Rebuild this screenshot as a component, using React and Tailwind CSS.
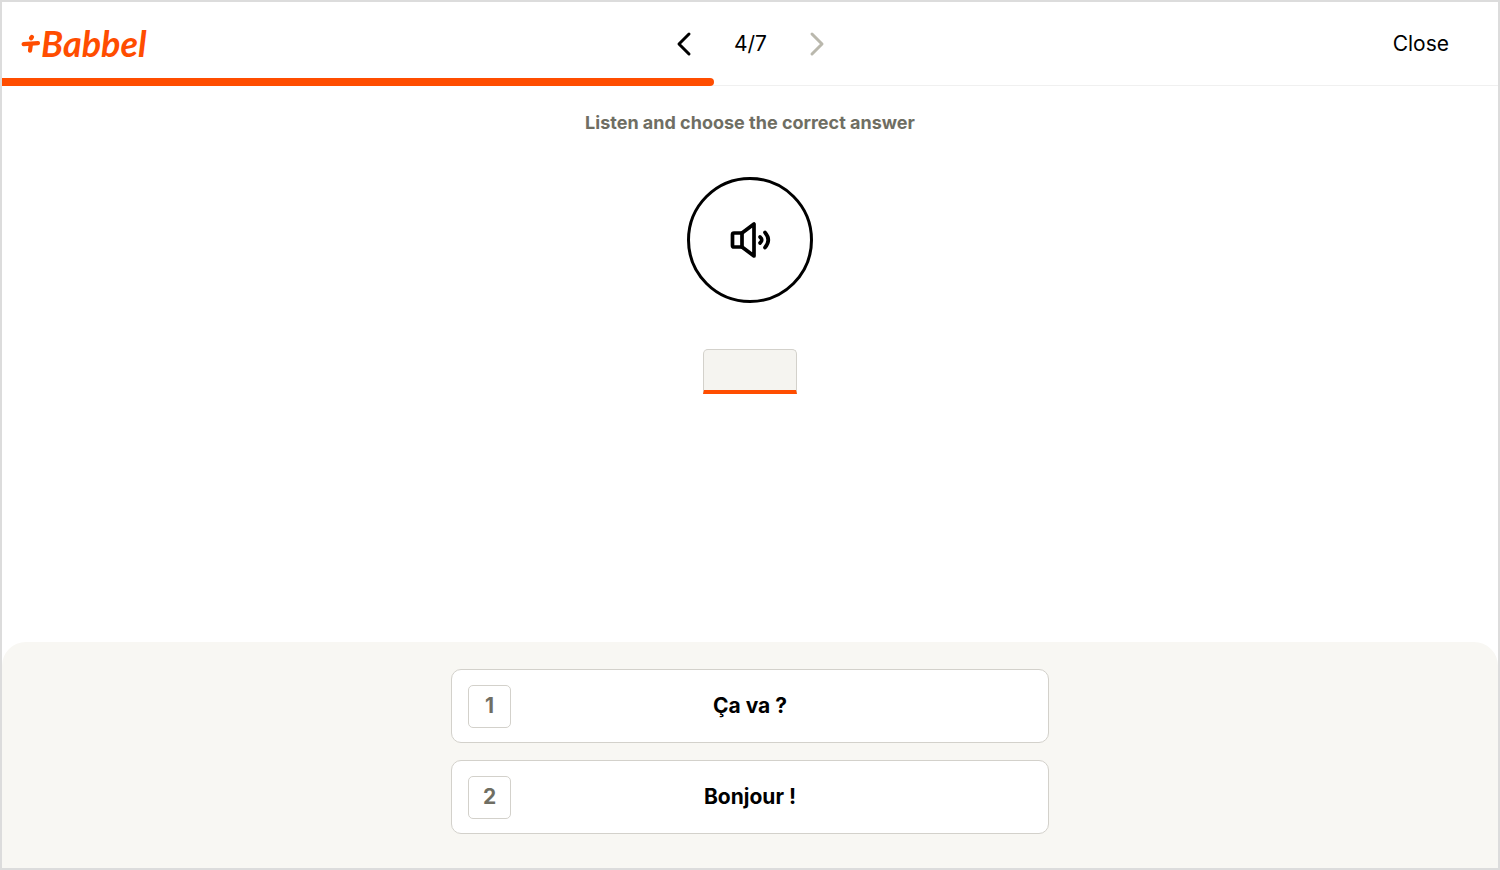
const answers = ["Ça va ?", "Bonjour !"];

function Logo() {
  return (
    <a href="#" aria-label="Babbel" className="flex items-center pb-0.5 text-[#ff4d00]">
      <svg width="20" height="28" viewBox="0 0 20 28" fill="none" stroke="currentColor" strokeLinecap="round">
        <path d="M2.6 15.2L17 14.2" strokeWidth="4.2" />
        <path d="M9.800 16L9 21.600" strokeWidth="4.200" />
        <path d="M10.900 8L10.100 9.100" strokeWidth="4.400" />
      </svg>
      <span className="font-[Lato,sans-serif] text-4xl font-bold italic">Babbel</span>
    </a>
  );
}

function Chevron({ d }) {
  return (
    <svg width="16" height="26" viewBox="0 0 16 26" fill="none" stroke="currentColor" strokeWidth="3" strokeLinecap="round" strokeLinejoin="round">
      <path d={d} />
    </svg>
  );
}

function Header() {
  return (
    <header className="relative grid h-[84px] grid-cols-3 items-center border-b border-[#f0f0f0] pr-[49px] pl-[19px]">
      <Logo />
      <nav className="flex items-center justify-center gap-[42px] pl-[31px]">
        <button type="button" aria-label="Previous">
          <Chevron d="M13 3L3 13L13 23" />
        </button>
        <span className="text-[21px]">4/7</span>
        <button type="button" aria-label="Next" disabled className="text-[#bab8ad]">
          <Chevron d="M3 3L13 13L3 23" />
        </button>
      </nav>
      <button type="button" className="justify-self-end text-[21px]">Close</button>
      <div
        role="progressbar"
        aria-label="Lesson progress"
        aria-valuenow={48}
        className="absolute -bottom-px left-0 h-2 w-[47.6%] rounded-r-full bg-[#ff4d00]"
      />
    </header>
  );
}

function SpeakerIcon() {
  return (
    <svg width="42" height="40" viewBox="0 0 42 40" fill="none" stroke="currentColor" strokeWidth="3.7" strokeLinecap="round" strokeLinejoin="round">
      <path d="M13 13H5Q3.500 13 3.500 14.500V25.500Q3.500 27 5 27H13Z" />
      <path d="M13 13L25 4V36L13 27" />
      <path d="M31 17Q34.500 20 31 23" />
      <path d="M36 12.500Q42.500 20 36 27.500" />
    </svg>
  );
}

function Answer({ number, text }) {
  return (
    <button
      type="button"
      className="grid h-[74px] w-full grid-cols-[44px_1fr_44px] items-center rounded-[10px] border border-[#d3d1cb] bg-white px-4"
    >
      <span className="flex h-[43px] w-[43px] items-center justify-center rounded-[5px] border border-[#d3d1cb] text-[#6f6e63]">
        {number}
      </span>
      <span>{text}</span>
    </button>
  );
}

export default function App() {
  return (
    <div className="flex min-h-screen flex-col border-2 border-[#dcdcdc] bg-white font-[Inter,sans-serif] text-black">
      <Header />
      <main className="flex flex-1 flex-col">
        <section className="flex flex-1 flex-col items-center pt-[23px]">
          <h1 className="text-lg font-bold text-[#6f6e63]">Listen and choose the correct answer</h1>
          <button
            type="button"
            aria-label="Play audio"
            className="mt-10 flex h-[126px] w-[126px] items-center justify-center rounded-full border-3 border-black"
          >
            <SpeakerIcon />
          </button>
          <input
            type="text"
            readOnly
            aria-label="Answer"
            className="mt-[46px] h-[45px] w-[94px] rounded-t-[5px] border border-b-4 border-[#d3d1cb] border-b-[#ff4d00] bg-[#f5f4f0] outline-none"
          />
        </section>
        <section className="rounded-t-3xl bg-[#f8f7f3] px-4 pt-[27px] pb-[34px]">
          <div className="mx-auto flex max-w-[598px] flex-col gap-[17px] text-[21px] font-bold">
            {answers.map((text, index) => (
              <Answer key={text} number={index + 1} text={text} />
            ))}
          </div>
        </section>
      </main>
    </div>
  );
}
